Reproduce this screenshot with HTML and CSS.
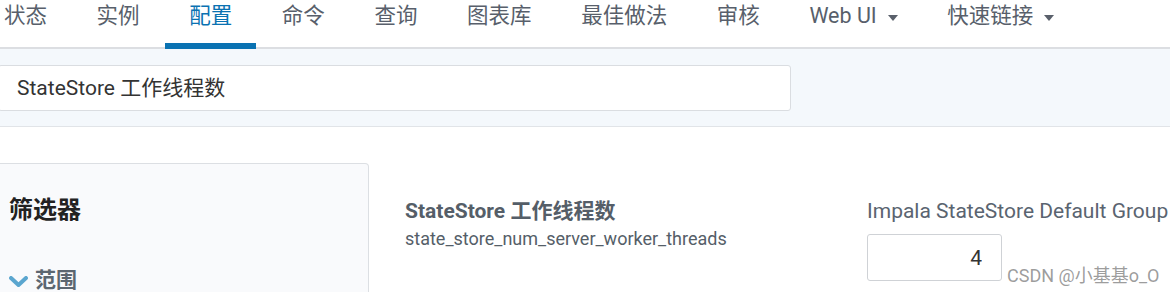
FILE: index.html
```html
<!DOCTYPE html>
<html lang="zh-CN">
<head>
  <meta charset="UTF-8">
  <meta name="viewport" content="width=device-width, initial-scale=1.0">
  <title>配置</title>
  <link rel="stylesheet" href="styles.css">
</head>
<body>
  <!-- Pestañas superiores -->
  <nav class="tabs">
    <a class="tab">状态</a>
    <a class="tab">实例</a>
    <a class="tab active">配置</a>
    <a class="tab">命令</a>
    <a class="tab">查询</a>
    <a class="tab">图表库</a>
    <a class="tab">最佳做法</a>
    <a class="tab">审核</a>
    <a class="tab">Web UI<span class="caret"></span></a>
    <a class="tab">快速链接<span class="caret"></span></a>
  </nav>

  <!-- Barra de búsqueda -->
  <div class="search-band">
    <div class="search-box">StateStore 工作线程数</div>
  </div>

  <div class="content">
    <!-- Panel de filtros -->
    <aside class="filters">
      <h3>筛选器</h3>
      <div class="scope">
        <svg class="chevron" width="19" height="12" viewBox="0 0 19 12">
          <path d="M2 2 L9.5 9 L17 2" fill="none" stroke="#5ba6cf" stroke-width="4" stroke-linecap="round" stroke-linejoin="round"/>
        </svg>
        范围
      </div>
    </aside>

    <!-- Fila de configuración -->
    <div class="config-row">
      <div class="config-name">
        <div class="config-title">StateStore 工作线程数</div>
        <div class="config-key">state_store_num_server_worker_threads</div>
      </div>
      <div class="config-value">
        <div class="group-name">Impala StateStore Default Group</div>
        <input class="num-input" type="text" value="4">
      </div>
    </div>
  </div>

  <div class="watermark">CSDN @小基基o_O</div>
</body>
</html>
```

FILE: styles.css
```css
/* Estilos generales */
body {
  margin: 0;
  font-family: Roboto, "Noto Sans CJK SC", sans-serif;
  background-color: #fff;
  overflow: hidden;
}

/* Pestañas */
.tabs {
  display: flex;
  height: 47px;
  margin-left: -20px;
  border-bottom: 2px solid #dcdee2;
}

.tab {
  display: flex;
  align-items: flex-start;
  box-sizing: border-box;
  height: 49px;
  margin-right: 1.6px;
  padding: 0 24px;
  line-height: 32px;
  font-size: 21.5px;
  color: #585f6b;
  white-space: nowrap;
}

.tab.active {
  color: #0a72b2;
  border-bottom: 6px solid #0a72b2;
}

.caret {
  align-self: center;
  width: 0;
  height: 0;
  margin: -14px 0 0 11px;
  border-top: 6px solid #5a606b;
  border-left: 5px solid transparent;
  border-right: 5px solid transparent;
}

/* Barra de búsqueda */
.search-band {
  background-color: #f4f8fc;
  padding: 16px 0 15px;
  border-bottom: 1px solid #e1e4e8;
}

.search-box {
  box-sizing: border-box;
  width: 793px;
  height: 46px;
  margin-left: -2px;
  padding-left: 18px;
  background-color: #fff;
  border: 1px solid #dadde1;
  border-radius: 3px;
  line-height: 44px;
  font-size: 21px;
  color: #333;
}

/* Contenido */
.content {
  display: flex;
  align-items: flex-start;
  margin-top: 36px;
}

.filters {
  box-sizing: border-box;
  flex: none;
  width: 379px;
  height: 200px;
  margin-left: -10px;
  padding: 31px 0 0 19px;
  background-color: #f9fafc;
  border: 1px solid #dcdfe3;
  border-left: none;
  border-radius: 0 4px 0 0;
}

.filters h3 {
  margin: 0;
  font-size: 24px;
  line-height: 30px;
  font-weight: bold;
  color: #222;
}

.scope {
  display: flex;
  align-items: center;
  margin-top: 40px;
  font-size: 21px;
  line-height: 30px;
  font-weight: bold;
  color: #5c6670;
}

.chevron {
  margin: 3px 7px 0 0;
}

/* Fila de configuración */
.config-row {
  display: flex;
  padding: 36px 0 0 36px;
}

.config-name {
  width: 462px;
}

.config-title {
  font-size: 21px;
  line-height: 25px;
  font-weight: bold;
  color: #555e68;
}

.config-key {
  margin-top: 4px;
  font-size: 18px;
  line-height: 22px;
  color: #555e68;
}

.group-name {
  font-size: 21px;
  line-height: 25px;
  color: #5a6470;
  white-space: nowrap;
}

.num-input {
  box-sizing: border-box;
  width: 135px;
  height: 47px;
  margin-top: 10px;
  padding: 0 19px 0 0;
  border: 1px solid #cfd2d6;
  border-radius: 3px;
  font-family: Roboto, sans-serif;
  font-size: 21px;
  text-align: right;
  color: #333;
}

/* Marca de agua */
.watermark {
  position: absolute;
  left: 1007px;
  top: 261px;
  font-size: 18px;
  color: rgba(140, 140, 140, 0.85);
  white-space: nowrap;
}
```
